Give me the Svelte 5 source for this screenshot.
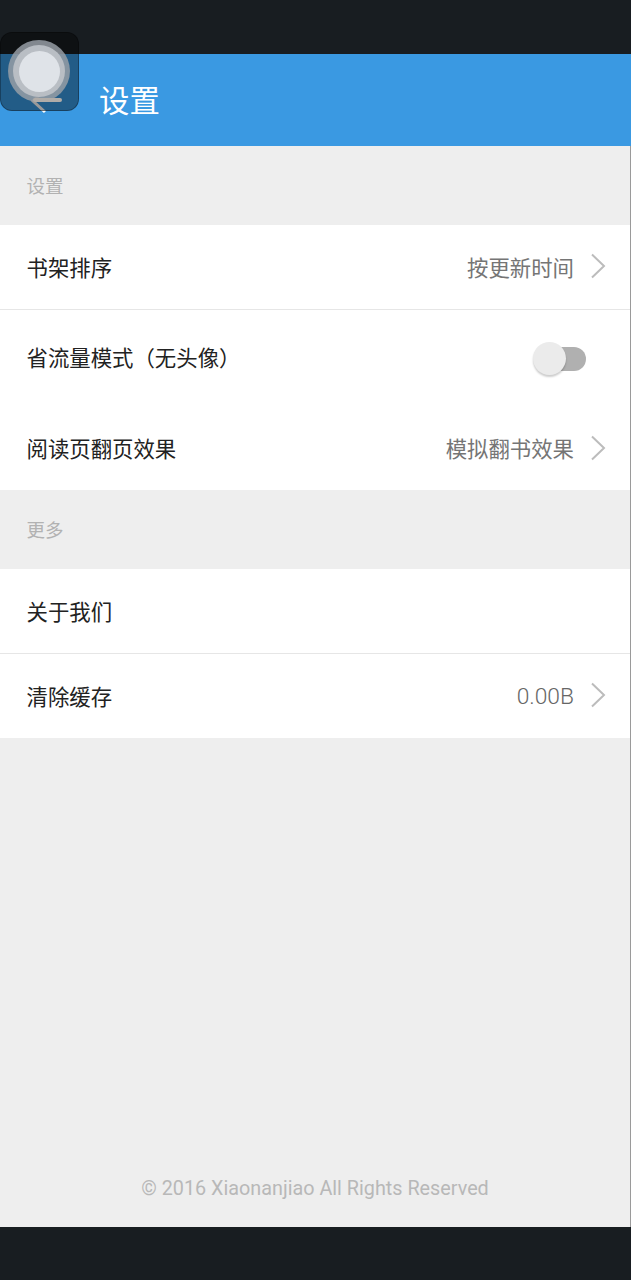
<script>
  const cn = "Roboto, 'Noto Sans CJK SC', sans-serif";
</script>

<div class="phone" style:font-family={cn}>
  <div class="statusbar"></div>
  <header class="topbar">
    <svg class="back" width="24" height="30" viewBox="0 0 24 30"><path d="M18 4 L6 15 L18 26" fill="none" stroke="#fff" stroke-width="3"/></svg>
    <h1>设置</h1>
    <div class="floater">
      <div class="halo"><div class="ring"><div class="core"></div></div></div>
      <span class="dash"></span>
    </div>
  </header>

  <main class="content">
    <div class="section-label">设置</div>
    <div class="group">
      <div class="row line">
        <span class="title">书架排序</span>
        <span class="value">按更新时间</span>
        {@render chevron()}
      </div>
      <div class="row tall">
        <span class="title">省流量模式（无头像）</span>
        <div class="switch"><span class="track"></span><span class="knob"></span></div>
      </div>
      <div class="row last">
        <span class="title">阅读页翻页效果</span>
        <span class="value">模拟翻书效果</span>
        {@render chevron()}
      </div>
    </div>

    <div class="section-label">更多</div>
    <div class="group">
      <div class="row line">
        <span class="title">关于我们</span>
      </div>
      <div class="row">
        <span class="title">清除缓存</span>
        <span class="value num">0.00B</span>
        {@render chevron()}
      </div>
    </div>

    <footer class="copyright">© 2016 Xiaonanjiao All Rights Reserved</footer>
  </main>
  <div class="navbar"></div>
</div>

{#snippet chevron()}
  <svg class="chevron" width="16" height="26" viewBox="0 0 16 26"><path d="M2 1.5 L14 13 L2 24.5" fill="none" stroke="#bcbcbc" stroke-width="2"/></svg>
{/snippet}

<style>
  :global(body) { margin: 0; background: #181d21; }

  .phone { width: 631px; height: 1280px; display: flex; flex-direction: column; background: #181d21; }
  .statusbar { height: 54px; flex: none; }
  .navbar { height: 53px; flex: none; }

  .topbar {
    position: relative;
    height: 92px;
    flex: none;
    display: flex;
    align-items: center;
    background: #3a99e2;
  }
  .topbar h1 { margin: 4px 0 0 99px; font-size: 30.4px; font-weight: 400; color: #fff; line-height: 1; }
  .back { position: absolute; left: 27px; top: 32px; }

  .floater {
    position: absolute;
    left: 0;
    top: -22px;
    width: 79px;
    height: 79px;
    box-sizing: border-box;
    border-radius: 12px;
    background: rgba(0, 0, 0, 0.4);
    border: 1px solid rgba(0, 0, 0, 0.3);
  }
  .halo {
    position: absolute;
    left: 7px;
    top: 7px;
    width: 62px;
    height: 62px;
    border-radius: 50%;
    background: rgba(150, 158, 166, 0.85);
    display: flex;
    align-items: center;
    justify-content: center;
  }
  .ring {
    width: 52px;
    height: 52px;
    border-radius: 50%;
    background: #b9bec4;
    display: flex;
    align-items: center;
    justify-content: center;
  }
  .core { width: 41px; height: 41px; border-radius: 50%; background: #dfe3e8; }
  .dash { position: absolute; left: 32px; top: 65px; width: 29px; height: 4px; border-radius: 2px; background: #b0aca8; }

  .content { flex: 1; display: flex; flex-direction: column; background: #eeeeee; border-right: 1px solid #9a9a9a; }
  .section-label { height: 79px; padding: 0 0 2px 26.5px; box-sizing: border-box; display: flex; align-items: center; font-size: 18.5px; color: #b2b2b2; flex: none; }
  .group { background: #fff; flex: none; }

  .row { height: 84px; display: flex; align-items: center; padding: 0 24px 0 26.5px; box-sizing: border-box; }
  .row.line { height: 85px; border-bottom: 1px solid #e6e6e6; }
  .row.tall { height: 97px; }
  .row.last { height: 83px; }
  .title { flex: 1; font-size: 21.4px; color: #222; padding-bottom: 2px; }
  .row.tall .title { padding-bottom: 4px; }
  .value { font-size: 21.4px; color: #757575; margin-right: 16px; padding-bottom: 2px; }
  .value.num { font-size: 22.8px; padding-bottom: 0; font-weight: 300; color: #666; }
  .chevron { flex: none; margin-bottom: 2px; }

  .switch { position: relative; width: 53px; height: 36px; margin-right: 20px; }
  .track { position: absolute; right: 0; top: 6px; width: 44px; height: 24px; border-radius: 12px; background: #b0b0b0; }
  .knob { position: absolute; left: 0; top: 1px; width: 33px; height: 33px; border-radius: 50%; background: #ebebeb; box-shadow: 0 2px 2px rgba(0, 0, 0, 0.2); }

  .copyright { margin-top: auto; padding-bottom: 27px; text-align: center; font-size: 19.8px; color: #b8b8b8; }
</style>
